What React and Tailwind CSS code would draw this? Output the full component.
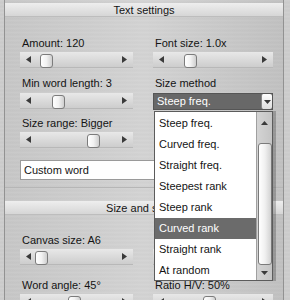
import React from "react";

const LeftTri = () => (
  <svg width="5" height="7" viewBox="0 0 5 7" className="block"><path d="M5 0 L0 3.5 L5 7 Z" fill="#3a3a3a" /></svg>
);
const RightTri = () => (
  <svg width="5" height="7" viewBox="0 0 5 7" className="block"><path d="M0 0 L5 3.5 L0 7 Z" fill="#3a3a3a" /></svg>
);
const DownTri = ({ c = "#3a3a3a" }) => (
  <svg width="7" height="4" viewBox="0 0 7 4" className="block"><path d="M0 0 L7 0 L3.5 4 Z" fill={c} /></svg>
);
const UpTri = ({ c = "#3a3a3a" }) => (
  <svg width="7" height="4" viewBox="0 0 7 4" className="block"><path d="M0 4 L7 4 L3.5 0 Z" fill={c} /></svg>
);

function Slider({ thumb, w = "w-[113px]" }) {
  return (
    <div className={`relative ${w} h-[16px] flex items-center justify-between px-[6px] bg-gradient-to-b from-[#e8e8e8] to-[#cdcdcd] border-b border-[#b8b8b8]`}>
      <LeftTri />
      <RightTri />
      <div
        className="absolute top-[2px] w-[13px] h-[14px] rounded-[3px] border border-[#7c7c7c] bg-gradient-to-r from-[#ffffff] via-[#f2f2f2] to-[#cfcfcf]"
        style={{ left: thumb }}
      />
    </div>
  );
}

function Label({ children, className = "" }) {
  return <div className={`h-[13px] leading-[13px] pl-[2px] whitespace-nowrap ${className}`}>{children}</div>;
}

function Header({ children }) {
  return (
    <div className="h-[14px] leading-[14px] text-center bg-gradient-to-b from-[#eeeeee] to-[#d6d6d6] border-b border-[#bdbdbd]">
      {children}
    </div>
  );
}

const items = [
  "Steep freq.",
  "Curved freq.",
  "Straight freq.",
  "Steepest rank",
  "Steep rank",
  "Curved rank",
  "Straight rank",
  "At random",
];

export default function App() {
  return (
    <div
      className="relative w-[290px] h-[300px] overflow-hidden text-[11px] text-[#141414] font-['Liberation_Sans',Arial,sans-serif] bg-[repeating-linear-gradient(180deg,#cbcbcb_0px,#d3d3d3_1px,#c6c6c6_2px,#cfcfcf_3px,#c9c9c9_4px)]"
    >
      <div className="ml-[4px] w-[280px] h-full border-l border-r border-[#929292] pt-[3px] bg-[linear-gradient(90deg,rgba(0,0,0,0.03),rgba(255,255,255,0.12)_50%,rgba(0,0,0,0.06))]">
        {/* Section 1 */}
        <Header>Text settings</Header>
        <div className="pl-[15px] pr-[10px] pt-[20px] pb-[7px] border-b border-[#b6b6b6]">
          <div className="flex gap-x-[20px]">
            <div className="w-[113px] flex flex-col">
              <Label>Amount: 120</Label>
              <div className="mt-[2px]"><Slider thumb="20px" /></div>
              <Label className="mt-[9px]">Min word length: 3</Label>
              <div className="mt-[3px]"><Slider thumb="32px" /></div>
              <Label className="mt-[8px]">Size range: Bigger</Label>
              <div className="mt-[2px]"><Slider thumb="67px" /></div>
            </div>
            <div className="w-[120px] flex flex-col">
              <Label>Font size: 1.0x</Label>
              <div className="mt-[2px]"><Slider thumb="31px" w="w-[120px]" /></div>
              <Label className="mt-[9px]">Size method</Label>
              <div className="mt-[3px] h-[17px] w-[120px] flex border border-[#555] bg-[#686868]">
                <div className="flex-1 text-white leading-[15px] pl-[3px]">Steep freq.</div>
                <div className="w-[11px] h-[15px] rounded-[2px] bg-gradient-to-b from-white to-[#dedede] border-l border-[#888] flex items-center justify-center">
                  <DownTri />
                </div>
              </div>
            </div>
          </div>
          <div className="mt-[12px] h-[20px] w-[253px] bg-white border border-[#9a9a9a] leading-[18px] pl-[3px]">
            Custom word
          </div>
        </div>

        {/* Section 2 */}
        <div className="mt-[13px]">
          <Header>Size and shape</Header>
          <div className="pl-[15px] pr-[10px] pt-[19px]">
            <div className="flex gap-x-[20px]">
              <div className="w-[113px] flex flex-col">
                <Label>Canvas size: A6</Label>
                <div className="mt-[2px]"><Slider thumb="15px" /></div>
                <Label className="mt-[14px]">Word angle: 45°</Label>
                <div className="mt-[2px]"><Slider thumb="48px" /></div>
              </div>
              <div className="w-[120px] flex flex-col">
                <Label>{"\u00a0"}</Label>
                <div className="mt-[2px]"><Slider thumb="50px" w="w-[120px]" /></div>
                <Label className="mt-[14px]">Ratio H/V: 50%</Label>
                <div className="mt-[2px]"><Slider thumb="50px" w="w-[120px]" /></div>
              </div>
            </div>
          </div>
        </div>
      </div>

      {/* Dropdown list overlay */}
      <div className="absolute left-[154px] top-[111px] w-[119px] h-[170px] border border-[#5c5c5c] bg-white flex shadow-[3px_0_0_rgba(0,0,0,0.22)]">
        <div className="flex-1 flex flex-col pt-[1px]">
          {items.map((t) => (
            <div
              key={t}
              className={`h-[21px] leading-[21px] pl-[4px] whitespace-nowrap ${t === "Curved rank" ? "bg-[#6b6b6b] text-white" : ""}`}
            >
              {t}
            </div>
          ))}
        </div>
        <div className="w-[16px] h-full flex flex-col items-center bg-gradient-to-r from-[#d4d4d4] to-[#c4c4c4] border-l border-[#a0a0a0]">
          <div className="h-[21px] flex items-center justify-center"><UpTri /></div>
          <div className="mt-[10px] w-[14px] h-[122px] rounded-[3px] border border-[#7a7a7a] bg-gradient-to-r from-[#ffffff] via-[#f0f0f0] to-[#d2d2d2]" />
          <div className="flex-1 flex items-center justify-center"><DownTri /></div>
        </div>
      </div>
    </div>
  );
}
